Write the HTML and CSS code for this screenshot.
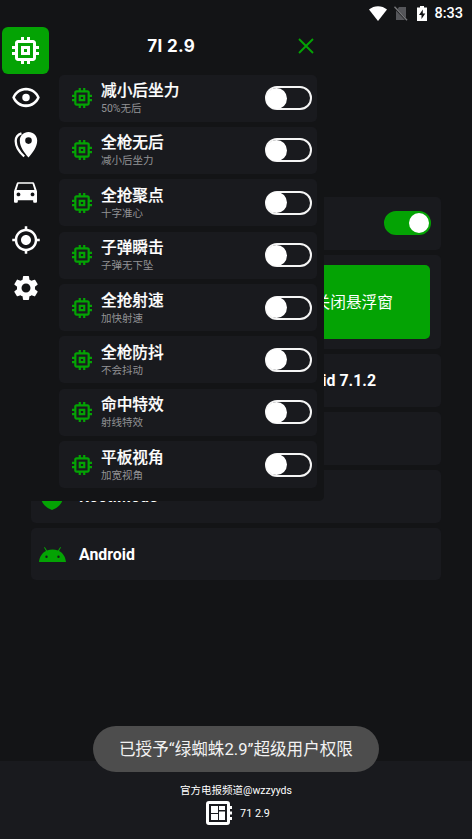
FILE: index.html
```html
<!DOCTYPE html>
<html lang="zh-CN">
<head>
<meta charset="utf-8">
<title>71 2.9</title>
<link rel="stylesheet" href="styles.css">
</head>
<body>
<svg class="defs" width="0" height="0">
  <symbol id="chip" viewBox="3 3 18 18"><path d="M15 9H9v6h6V9zm-2 4h-2v-2h2v2zm8-2V9h-2V7c0-1.1-.9-2-2-2h-2V3h-2v2h-2V3H9v2H7c-1.1 0-2 .9-2 2v2H3v2h2v2H3v2h2v2c0 1.100.9 2 2 2h2v2h2v-2h2v2h2v-2h2c1.100 0 2-.9 2-2v-2h2v-2h-2v-2h2zm-4 6H7V7h10v10z"/></symbol>
</svg>
<div class="screen">
  <header class="status">
    <svg class="wifi" viewBox="0 0 18 15"><path d="M9 15 0 3.500C5-1 13-1 18 3.500z"/></svg>
    <svg class="sim" viewBox="0 0 14 15"><path d="M5 1h7v11L3.500 3zM2 4.500 11 14H2z"/><path class="slash" d="M.5.8 13 14.300"/></svg>
    <svg class="battery" viewBox="0 0 10 15"><path fill-rule="evenodd" d="M3 0h4v1.500h3V15H0V1.500h3zM5.800 3.500 2 9h2.500v4L8.300 7.500H5.800z"/></svg>
    <span>8:33</span>
  </header>

  <main class="cards">
    <section class="card switch-card"><i class="toggle on"></i></section>
    <section class="card action-card"><button class="action"><span>关闭悬浮窗</span></button></section>
    <section class="card version"><b>Android 7.1.2</b></section>
    <section class="card"></section>
    <section class="card item"><svg class="shield" viewBox="0 0 22 26"><path d="M11 0 22 5v8c0 6-5 11-11 13C5 24 0 19 0 13V5z"/></svg><b>Root.Mode</b></section>
    <section class="card item"><svg class="droid" viewBox="0 0 27 15"><path fill-rule="evenodd" d="M0 15C.5 10 3 6 7 4L5 .5l.8-.5L8 3.500a15 15 0 0 1 11 0L21.200 0l.8.5L20 4c4 2 6.500 6 7 11zM7.500 8.600a1.200 1.200 0 1 0 0 2.400 1.200 1.200 0 0 0 0-2.400m12 0a1.200 1.200 0 1 0 0 2.400 1.200 1.200 0 0 0 0-2.400"/></svg><b>Android</b></section>
  </main>

  <footer class="footer">
    <div class="channel">官方电报频道@wzzyyds</div>
    <div class="brand">
      <svg viewBox="0 0 26 24"><path fill-rule="evenodd" d="M3 0h18q3 0 3 3v2h2v3h-2v2.500h2v3h-2V16h2v3h-2v2q0 3-3 3H3q-3 0-3-3V3q0-3 3-3m0 3v18h18V3zM5 5h7v7H5zm8 0h6v4h-6zm-8 8h7v6H5zm8-2.500h6V19h-6z"/></svg>
      <span>71 2.9</span>
    </div>
  </footer>

  <div class="panel">
    <nav class="side">
      <a class="active"><svg class="i-chip"><use href="#chip"/></svg></a>
      <a><svg class="icon" viewBox="0 0 24 24"><path d="M12 6c3.800 0 7.200 2.100 8.800 5.500-1.600 3.400-5 5.500-8.800 5.500s-7.200-2.100-8.800-5.500C4.800 8.100 8.200 6 12 6m0-2.300C7 3.700 2.700 6.900 1 11.500c1.700 4.600 6 7.800 11 7.800s9.300-3.200 11-7.800C21.300 6.900 17 3.700 12 3.700m0 4.800a3 3 0 1 0 0 6 3 3 0 0 0 0-6"/></svg></a>
      <a><svg class="pins" viewBox="0 0 24 26"><path fill-rule="evenodd" d="M14.500 0C9.500 0 5.800 3.800 5.800 8.500c0 6.500 4.700 12.500 8.700 17 4-4.500 8.700-10.500 8.700-17C23.200 3.800 19.500 0 14.500 0m0 5.300a3.300 3.300 0 1 1 0 6.600 3.300 3.300 0 0 1 0-6.600"/><path class="outline" d="M7.500 1.300C3.500 2.500 1.700 5 1.700 9c0 6 4 11.500 8.500 15.500"/></svg></a>
      <a><svg class="car" viewBox="3 4 18 16"><path d="M18.920 5.010C18.720 4.420 18.160 4 17.500 4h-11c-.66 0-1.210.42-1.420 1.010L3 11v8c0 .55.450 1 1 1h1c.55 0 1-.45 1-1v-1h12v1c0 .55.450 1 1 1h1c.55 0 1-.45 1-1v-8l-2.080-5.990zM6.500 15c-.83 0-1.500-.67-1.500-1.500S5.670 12 6.500 12s1.500.67 1.500 1.500S7.330 15 6.500 15zm11 0c-.83 0-1.500-.67-1.500-1.500s.67-1.500 1.500-1.500 1.500.67 1.500 1.500-.67 1.500-1.500 1.500zM5 10l1.500-4.800h11L19 10H5z"/></svg></a>
      <a><svg class="icon" viewBox="0 0 24 24"><path d="M12 8c-2.210 0-4 1.790-4 4s1.790 4 4 4 4-1.790 4-4-1.790-4-4-4zm8.940 3c-.46-4.170-3.770-7.480-7.940-7.940V1h-2v2.060C6.830 3.520 3.520 6.830 3.060 11H1v2h2.060c.46 4.170 3.770 7.480 7.940 7.940V23h2v-2.060c4.170-.46 7.480-3.770 7.940-7.940H23v-2h-2.060zM12 19c-3.870 0-7-3.130-7-7s3.130-7 7-7 7 3.130 7 7-3.130 7-7 7z"/></svg></a>
      <a><svg class="icon gear" viewBox="0 0 24 24"><path d="M19.140 12.940c.04-.3.060-.61.060-.94 0-.32-.02-.64-.07-.94l2.030-1.580c.18-.14.230-.41.120-.61l-1.920-3.320c-.12-.22-.37-.29-.59-.22l-2.390.96c-.5-.38-1.030-.7-1.620-.94l-.36-2.540c-.04-.24-.24-.41-.48-.41h-3.840c-.24 0-.43.170-.47.410l-.36 2.540c-.59.240-1.130.570-1.620.940l-2.390-.96c-.22-.08-.47 0-.59.220L2.740 8.870c-.12.210-.08.470.120.610l2.030 1.580c-.05.300-.09.630-.09.940s.02.640.070.940l-2.030 1.580c-.18.140-.23.410-.12.610l1.920 3.320c.12.220.370.290.590.220l2.390-.96c.5.380 1.030.700 1.620.940l.36 2.540c.05.240.240.410.480.410h3.840c.24 0 .44-.17.470-.41l.36-2.540c.59-.24 1.130-.56 1.620-.94l2.390.96c.22.080.470 0 .59-.22l1.920-3.320c.12-.22.070-.47-.12-.61l-2.010-1.580zM12 15.600c-1.980 0-3.600-1.620-3.600-3.600s1.620-3.600 3.600-3.600 3.600 1.620 3.600 3.600-1.620 3.600-3.600 3.600z"/></svg></a>
    </nav>
    <div class="content">
      <div class="head"><span class="title">7I 2.9</span><svg class="close" viewBox="0 0 16 16"><path d="M1 1 15 15M15 1 1 15"/></svg></div>
      <div class="rows">
        <div class="row"><svg><use href="#chip"/></svg><div><b>减小后坐力</b><small>50%无后</small></div><i class="toggle"></i></div>
        <div class="row"><svg><use href="#chip"/></svg><div><b>全枪无后</b><small>减小后坐力</small></div><i class="toggle"></i></div>
        <div class="row"><svg><use href="#chip"/></svg><div><b>全抢聚点</b><small>十字准心</small></div><i class="toggle"></i></div>
        <div class="row"><svg><use href="#chip"/></svg><div><b>子弹瞬击</b><small>子弹无下坠</small></div><i class="toggle"></i></div>
        <div class="row"><svg><use href="#chip"/></svg><div><b>全抢射速</b><small>加快射速</small></div><i class="toggle"></i></div>
        <div class="row"><svg><use href="#chip"/></svg><div><b>全枪防抖</b><small>不会抖动</small></div><i class="toggle"></i></div>
        <div class="row"><svg><use href="#chip"/></svg><div><b>命中特效</b><small>射线特效</small></div><i class="toggle"></i></div>
        <div class="row"><svg><use href="#chip"/></svg><div><b>平板视角</b><small>加宽视角</small></div><i class="toggle"></i></div>
      </div>
    </div>
  </div>

  <div class="toast">已授予“绿蜘蛛2.9”超级用户权限</div>
</div>
</body>
</html>
```
FILE: styles.css
```css
* { box-sizing: border-box; }
body { margin: 0; background: #131416; color: #fff; font-family: Roboto, "Noto Sans CJK SC", sans-serif; }
svg { display: block; fill: currentColor; flex: none; }
.defs { position: absolute; }
.screen { position: relative; width: 472px; height: 839px; overflow: hidden; display: flex; flex-direction: column; background: #131416; }

.status { height: 26px; flex: none; display: flex; justify-content: flex-end; align-items: center; padding-right: 9px; font-size: 14.500px; font-weight: 500; }
.wifi { width: 18px; height: 15px; margin-right: 7px; }
.sim { width: 14px; height: 15px; margin-right: 9px; color: #55565a; }
.slash { stroke: #77787b; stroke-width: 1.300; fill: none; }
.battery { width: 10px; height: 15px; margin-right: 7px; }

.cards { flex: 1; padding: 171px 31px 0; display: flex; flex-direction: column; gap: 5.200px; }
.card { height: 52.700px; flex: none; background: #191a1e; border-radius: 5px; display: flex; align-items: center; }
.switch-card { justify-content: flex-end; padding-right: 10.500px; }
.action-card { height: 94px; padding: 0 11px; }
.action { width: 100%; height: 74px; border: 0; border-radius: 5px; background: #04a304; color: #fff; font: 15.700px Roboto, "Noto Sans CJK SC", sans-serif; text-align: right; padding: 0 37px 0 0; }
.version { justify-content: flex-end; padding-right: 65px; }
.card b { font-size: 15.900px; font-weight: 700; }
.item svg { color: #04a304; }
.shield { width: 22px; height: 26px; margin: 2px 16px 0 10px; }
.droid { width: 27px; height: 15px; margin: 0 13px 0 8px; }

.footer { height: 78px; flex: none; background: #191a1e; display: flex; flex-direction: column; align-items: center; padding-top: 20px; font-size: 10.500px; }
.channel { height: 18px; line-height: 19px; }
.brand { display: flex; align-items: center; gap: 8px; height: 28px; margin-left: 4px; font-size: 10.800px; }
.brand svg { width: 26px; height: 24px; }

.panel { position: absolute; left: 0; top: 24px; width: 324px; height: 477px; background: #131416; border-radius: 0 0 5px 0; display: flex; }
.side { width: 51px; padding: 3px 2px 0; }
.side a { height: 47.400px; border-radius: 6px; display: flex; align-items: center; justify-content: center; }
.side .active { background: #04a304; }
.icon { width: 30px; height: 30px; }
.i-chip { width: 27px; height: 27px; }
.pins { width: 24px; height: 26px; }
.car { width: 23px; height: 21px; }
.outline { fill: none; stroke: #fff; stroke-width: 2.300; }
.content { flex: 1; padding: 0 7px 0 8px; }
.head { height: 50.500px; display: flex; align-items: center; justify-content: flex-end; padding: 0 3px 6px 0; }
.title { font-family: Inter, sans-serif; font-weight: 700; font-size: 17px; letter-spacing: .3px; }
.close { width: 16px; height: 16px; margin-left: 103px; fill: none; stroke: #04a304; stroke-width: 1.900; }
.rows { display: flex; flex-direction: column; gap: 5.400px; }
.row { height: 47px; border-radius: 5px; background: #191a1e; display: flex; align-items: center; padding: 0 5px 0 13px; }
.row svg { width: 20px; height: 20px; color: #04a304; margin-right: 9px; }
.row div { flex: 1; padding-top: 2px; }
.row b, .row small { display: block; white-space: nowrap; }
.row b { font-size: 15.700px; font-weight: 500; line-height: 20px; -webkit-text-stroke: .2px #fff; }
.row small { font-size: 10.500px; line-height: 16px; color: #929295; }

.toggle { width: 47px; height: 24px; flex: none; border: 2px solid #f5f5f5; border-radius: 12px; display: flex; align-items: center; }
.toggle::before { content: ""; width: 21px; height: 21px; border-radius: 50%; background: #fff; margin-left: -1px; flex: none; }
.toggle.on { border-color: #04a304; background: #04a304; justify-content: flex-end; }
.toggle.on::before { width: 20px; height: 20px; margin: 0; }

.toast { position: absolute; left: 93px; top: 726px; width: 286px; height: 46px; border-radius: 23px; background: #4d4d4d; color: #f2f2f2; font-size: 16.600px; line-height: 47px; text-align: center; white-space: nowrap; }
```
